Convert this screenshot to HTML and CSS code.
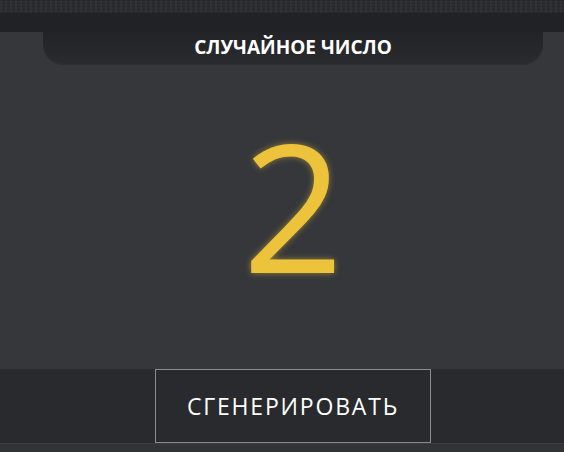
FILE: index.html
```html
<!DOCTYPE html>
<html lang="ru">
<head>
    <meta charset="UTF-8">
    <meta name="viewport" content="width=device-width, initial-scale=1.0">
    <title>Случайное число</title>
    <link rel="stylesheet" href="styles.css">
</head>
<body>
    <div class="top-strip"></div>
    <div class="top-bar"></div>

    <main class="panel">
        <div class="tab">
            <h1>Случайное число</h1>
        </div>
        <div class="number" id="number">2</div>
    </main>

    <footer class="footer">
        <button class="generate" onclick="generate()">Сгенерировать</button>
    </footer>
    <div class="bottom-strip"></div>

    <script>
        // Random number from 1 to 10
        function generate() {
            document.getElementById('number').textContent = Math.floor(Math.random() * 10) + 1;
        }
    </script>
</body>
</html>
```

FILE: styles.css
```css
html, body {
    height: 100%;
}
body {
    margin: 0;
    font-family: "Open Sans", "Noto Sans", sans-serif;
    background-color: #35373b;
    display: flex;
    flex-direction: column;
    overflow: hidden;
}
.top-strip {
    height: 13px;
    background-color: #2b2c2f;
    background-image: repeating-linear-gradient(90deg, rgba(255,255,255,0.03) 0 2px, transparent 2px 5px),
        repeating-linear-gradient(0deg, rgba(0,0,0,0.12) 0 1px, transparent 1px 3px);
}
.top-bar {
    height: 19px;
    background-color: #212225;
}
.panel {
    height: 337px;
    padding-left: 22px;
    display: flex;
    flex-direction: column;
    align-items: center;
    background-color: #35373b;
}
.tab {
    width: 500px;
    height: 32px;
    border-radius: 0 0 20px 20px;
    background: linear-gradient(#222326, #2a2b2f);
    box-shadow: 0 1px 0 #2d2f33;
    display: flex;
    align-items: center;
    justify-content: center;
}
.tab h1 {
    margin: 0;
    color: #fff;
    font-size: 19px;
    font-weight: 700;
    text-transform: uppercase;
    padding-bottom: 3px;
}
.number {
    margin-top: 52px;
    color: #ecc33a;
    font-size: 177px;
    font-weight: 400;
    line-height: 1;
    text-shadow: 0 0 6px rgba(236, 195, 58, 0.55);
}
.footer {
    height: 74px;
    padding-left: 22px;
    background-color: #282a2e;
    display: flex;
    justify-content: center;
}
.generate {
    width: 276px;
    height: 74px;
    background-color: #282a2e;
    border: 1px solid #8b8b8b;
    color: #fff;
    font-family: "Open Sans", "Noto Sans", sans-serif;
    font-size: 23px;
    letter-spacing: 1.8px;
    text-transform: uppercase;
    cursor: pointer;
}
.generate:hover {
    background-color: #303237;
}
.bottom-strip {
    flex: 1;
    background-color: #313337;
    border-top: 1px solid #3a3c40;
}
```
